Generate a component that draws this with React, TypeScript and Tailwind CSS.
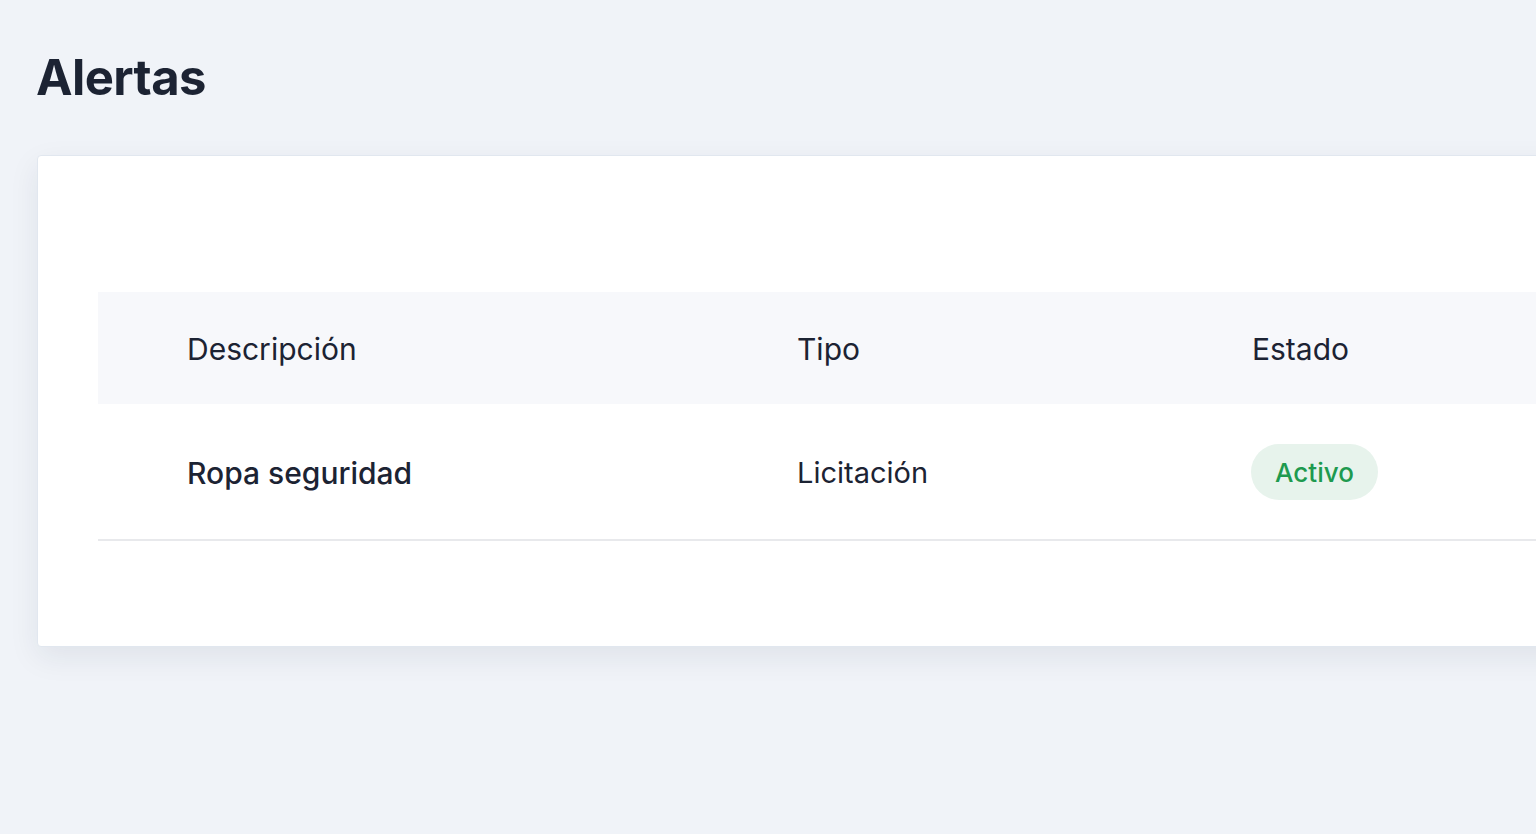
import React from "react";

const rows = [{ descripcion: "Ropa seguridad", tipo: "Licitación", estado: "Activo" }];

export default function App() {
    return (
        <div
            className="h-[834px] w-[1536px] overflow-hidden bg-[#f0f3f8] text-[#1c2333]"
            style={{ fontFamily: "Inter, 'Noto Sans', sans-serif" }}
        >
            <div className="pl-[37px] pt-[48px]">
                <h1 className="-ml-px text-[49px] font-bold leading-[60px] tracking-[-0.6px]">Alertas</h1>
                <div className="mt-[47px] w-[1600px] h-[492px] rounded-[4px] border border-[#e1e7ef] bg-white shadow-[0_10px_30px_rgba(30,41,59,0.08)]">
                    <div className="pl-[60px] pt-[136px]">
                        <div className="flex h-[112px] items-center bg-[#f7f8fb] pl-[89px] pt-[2px] text-[30px]">
                            <div className="w-[610px]">Descripción</div>
                            <div className="w-[455px]">Tipo</div>
                            <div>Estado</div>
                        </div>
                        {rows.map((r) => (
                            <div
                                key={r.descripcion}
                                className="flex h-[137px] items-center border-b-2 border-[#e8e9ec] pl-[89px] pt-[3px] text-[30px]"
                            >
                                <div className="w-[610px] font-medium">{r.descripcion}</div>
                                <div className="w-[455px] text-[29px]">{r.tipo}</div>
                                <div>
                                    <span className="-ml-px -mt-[3px] inline-flex h-[56px] w-[127px] items-center justify-center rounded-full bg-[#e7f3ec] pt-[2px] text-[26px] font-medium text-[#1e9a4f]">
                                        {r.estado}
                                    </span>
                                </div>
                            </div>
                        ))}
                    </div>
                </div>
            </div>
        </div>
    );
}
